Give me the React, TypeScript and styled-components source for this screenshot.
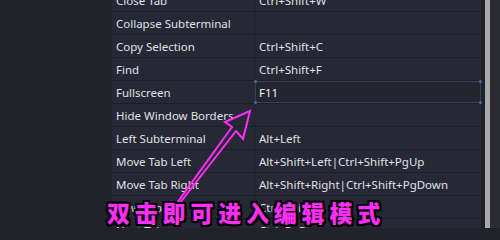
import styled, { createGlobalStyle } from "styled-components";

const GlobalStyle = createGlobalStyle`
  html, body {
    margin: 0;
    padding: 0;
    background: #22232a;
  }
  body {
    font-family: "Noto Sans", "Open Sans", sans-serif;
  }
`;

const Page = styled.div`
  position: relative;
  display: flex;
  align-items: flex-start;
  width: 500px;
  height: 228px;
  overflow: hidden;
  background: #22232a;
`;

const Sidebar = styled.div`
  width: 112px;
  height: 100%;
  flex-shrink: 0;
  background: #22232a;
`;

const Table = styled.div`
  display: flex;
  flex-direction: column;
  flex-shrink: 0;
  width: 369px;
  margin-top: -11px;
  background: #262835;
`;

const Row = styled.div`
  display: flex;
  flex-shrink: 0;
  height: 23px;
  border-bottom: 1px solid #1d1e27;
  box-sizing: border-box;
  color: #e0e0e6;
  font-size: 11.5px;
`;

const NameCell = styled.div`
  display: flex;
  align-items: center;
  width: 143px;
  padding-left: 4px;
  box-sizing: border-box;
  white-space: nowrap;
`;

const ValueCell = styled.div<{ $editing?: boolean }>`
  position: relative;
  display: flex;
  align-items: center;
  flex: 1;
  padding-left: 3px;
  box-sizing: border-box;
  white-space: nowrap;
  border-left: 1px solid #23242f;
  ${(p) =>
    p.$editing &&
    `
    background: #22242f;
    border: 1px solid #3c3f52;
    border-radius: 2px;
    color: #f0f0f4;
  `}
`;

const Handle = styled.span<{ $top?: boolean; $left?: boolean }>`
  position: absolute;
  width: 3px;
  height: 3px;
  border-radius: 50%;
  background: #3f6aa6;
  ${(p) => (p.$top ? "top: -2px;" : "bottom: -2px;")}
  ${(p) => (p.$left ? "left: -2px;" : "right: -2px;")}
`;

const Scrollbar = styled.div`
  display: flex;
  flex: 1;
  height: 100%;
  background: #2a2b33;
`;

const Gutter = styled.div`
  width: 4px;
  background: #1f2027;
`;

const Thumb = styled.div`
  width: 5px;
  background: #a8a8ac;
`;

const Overlay = styled.svg`
  position: absolute;
  left: 0;
  top: 0;
  pointer-events: none;
`;

const Caption = styled.div`
  position: absolute;
  left: 107px;
  top: 197px;
  font-family: "Noto Sans CJK SC", sans-serif;
  font-weight: 900;
  font-size: 23px;
  letter-spacing: 4.8px;
  color: #ff2ef5;
  line-height: 30px;
  white-space: nowrap;
  text-shadow: -2px -2px 0 #000, 2px -2px 0 #000, -2px 2px 0 #000, 2px 2px 0 #000,
    0 2px 0 #000, 0 -2px 0 #000, 2px 0 0 #000, -2px 0 0 #000;
`;

const rows: [string, string][] = [
  ["Close Tab", "Ctrl+Shift+W"],
  ["Collapse Subterminal", ""],
  ["Copy Selection", "Ctrl+Shift+C"],
  ["Find", "Ctrl+Shift+F"],
  ["Fullscreen", "F11"],
  ["Hide Window Borders", ""],
  ["Left Subterminal", "Alt+Left"],
  ["Move Tab Left", "Alt+Shift+Left|Ctrl+Shift+PgUp"],
  ["Move Tab Right", "Alt+Shift+Right|Ctrl+Shift+PgDown"],
  ["New Tab", "Ctrl+Shift+T"],
  ["Next Tab", "Ctrl+PgDown"],
];

const App = () => {
  return (
    <Page>
      <GlobalStyle />
      <Sidebar />
      <Table>
        {rows.map(([name, keys]) => (
          <Row key={name}>
            <NameCell>{name}</NameCell>
            <ValueCell $editing={name === "Fullscreen"}>
              {keys}
              {name === "Fullscreen" && (
                <>
                  <Handle $top $left />
                  <Handle $top />
                  <Handle $left />
                  <Handle />
                </>
              )}
            </ValueCell>
          </Row>
        ))}
      </Table>
      <Scrollbar>
        <Gutter />
        <Thumb />
      </Scrollbar>
      <Overlay width="500" height="228" viewBox="0 0 500 228">
        <path
          d="M250 111 L225 122 L232 127 L177 203 L179 204 L236 131 L243 139 Z"
          fill="none"
          stroke="#ff2ef5"
          strokeWidth="2"
          strokeLinejoin="miter"
        />
      </Overlay>
      <Caption>双击即可进入编辑模式</Caption>
    </Page>
  );
};

export default App;
